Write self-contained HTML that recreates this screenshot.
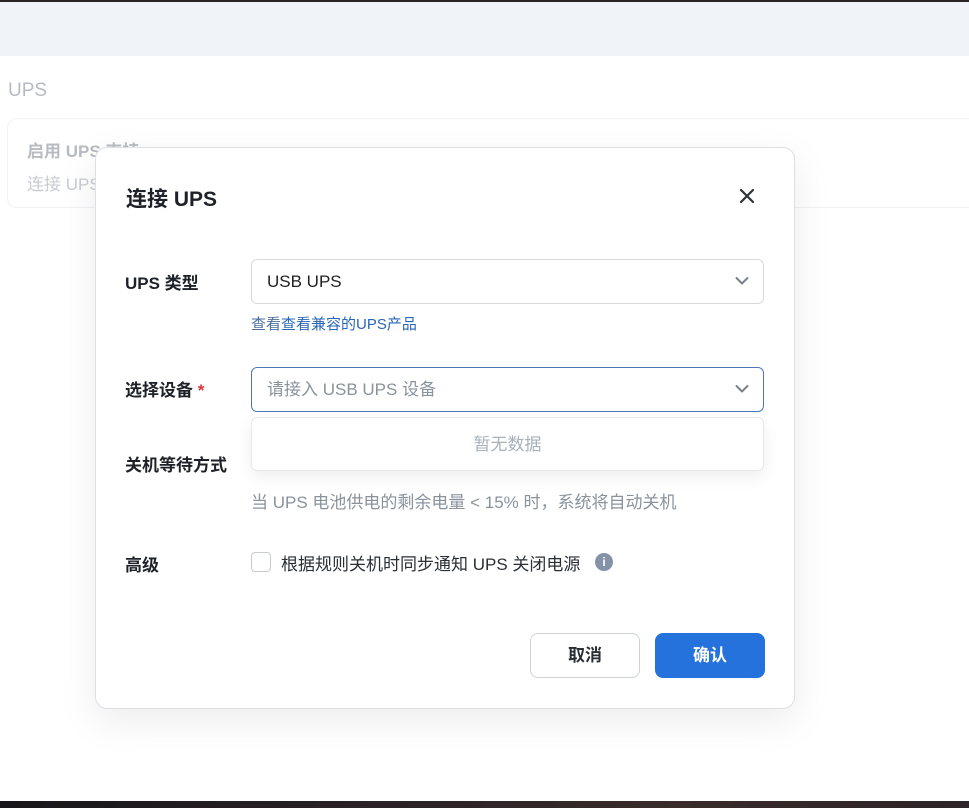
<!DOCTYPE html>
<html><head><meta charset="utf-8"><style>
*{box-sizing:border-box;margin:0;padding:0}
body{width:969px;height:808px;position:relative;overflow:hidden;background:#fff;font-family:"Liberation Sans","Noto Sans CJK SC",sans-serif;}
.top{position:absolute;left:0;top:0;width:969px;height:2px;background:#2a2426}
.band{position:absolute;left:0;top:2px;width:969px;height:54px;background:#f0f3f7}
.bot{position:absolute;left:0;top:801px;width:969px;height:7px;background:linear-gradient(90deg,#18161a,#2a2226 40%,#3a2a2a 70%,#2c2428)}
.t{position:absolute;white-space:nowrap}
.card{position:absolute;left:7px;top:118px;width:980px;height:90px;border:1px solid #f0f1f3;border-radius:10px}
.modal{position:absolute;left:95px;top:147px;width:700px;height:562px;background:#fff;border:1px solid #dcdfe4;border-radius:12px;box-shadow:0 12px 40px rgba(0,0,0,.08)}
.sel{position:absolute;left:155px;width:513px;height:45px;border:1px solid #d6d9de;border-radius:6px;font-size:17px;padding:0 15px;line-height:43px;color:#222}
.lab{position:absolute;left:29px;font-size:17px;font-weight:bold;color:#1e2228}
.chev{position:absolute;right:14px;top:16px}
.btn{position:absolute;top:485px;width:110px;height:45px;border-radius:8px;font-size:17px;font-weight:bold;text-align:center;line-height:43px}
</style></head><body>
<div class="top"></div><div class="band"></div><div class="bot"></div>
<div class="t" style="left:8px;top:80px;font-size:19px;color:#b8bcc2">UPS</div>
<div class="card"></div>
<div class="t" style="left:27px;top:137px;font-size:17px;font-weight:bold;color:#b8bcc2">启用 UPS 支持</div>
<div class="t" style="left:27px;top:170px;font-size:17px;color:#c8ccd2">连接 UPS</div>
<div class="modal">
<div class="t" style="left:30px;top:35px;font-size:21px;font-weight:bold;color:#1e2228">连接 UPS</div>
<svg style="position:absolute;left:644px;top:41px" width="14" height="14" viewBox="0 0 14 14"><path d="M1 1L13 13M13 1L1 13" stroke="#2d323a" stroke-width="2.2" stroke-linecap="round"/></svg>
<div class="lab" style="top:121px">UPS 类型</div>
<div class="sel" style="top:111px">USB UPS<svg class="chev" width="14" height="10" viewBox="0 0 14 10"><path d="M1.5 2L7 7.5L12.5 2" stroke="#7a808a" stroke-width="2" fill="none" stroke-linecap="round"/></svg></div>
<div class="t" style="left:155px;top:165px;font-size:15px;color:#4a6d9e">查看<span style="color:#2866b8">查看兼容的UPS产品</span></div>
<div class="lab" style="top:228px">选择设备 <span style="color:#e0303a">*</span></div>
<div class="sel" style="top:219px;border-color:#4b78b8;color:#8a929c">请接入 USB UPS 设备<svg class="chev" width="14" height="10" viewBox="0 0 14 10"><path d="M1.5 2L7 7.5L12.5 2" stroke="#7a808a" stroke-width="2" fill="none" stroke-linecap="round"/></svg></div>
<div style="position:absolute;left:155px;top:269px;width:513px;height:54px;border:1px solid #e6e8eb;border-radius:6px;box-shadow:0 6px 16px rgba(0,0,0,.07);text-align:center;line-height:54px;font-size:17px;color:#a8b0ba">暂无数据</div>
<div class="lab" style="top:303px">关机等待方式</div>
<div class="t" style="left:155px;top:340px;font-size:17px;color:#8a929c">当 UPS 电池供电的剩余电量 &lt; 15% 时，系统将自动关机</div>
<div class="lab" style="top:403px">高级</div>
<div style="position:absolute;left:155px;top:404px;width:20px;height:20px;border:1px solid #c8ccd2;border-radius:4px"></div>
<div class="t" style="left:185px;top:402px;font-size:17px;color:#2a2e35">根据规则关机时同步通知 UPS 关闭电源</div>
<div style="position:absolute;left:499px;top:405px;width:18px;height:18px;border-radius:50%;background:#8493a8;color:#fff;font-size:12px;font-weight:bold;text-align:center;line-height:18px">i</div>
<div class="btn" style="left:434px;border:1px solid #cfd3d9;color:#2a2e35">取消</div>
<div class="btn" style="left:559px;background:#2672dc;color:#fff;border:1px solid #2672dc">确认</div>
</div>
</body></html>
